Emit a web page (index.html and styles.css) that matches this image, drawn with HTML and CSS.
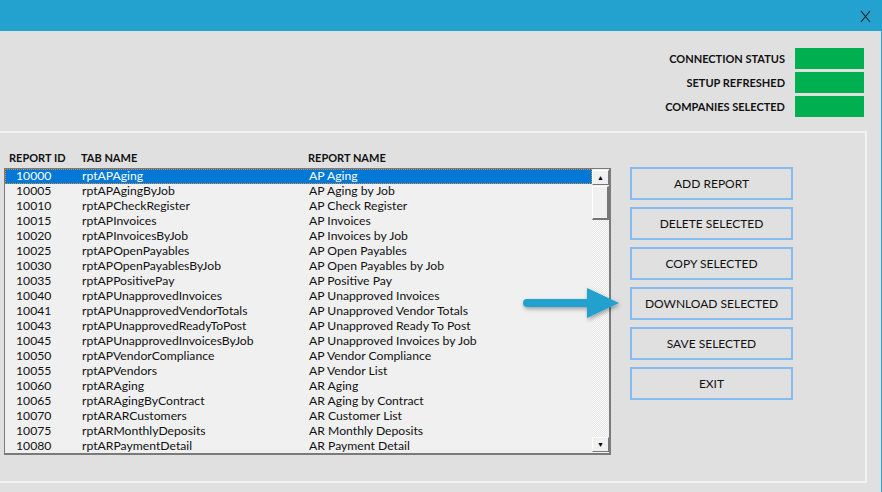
FILE: index.html
```html
<!DOCTYPE html>
<html lang="en">
<head>
    <meta charset="UTF-8">
    <title>Report Manager</title>
    <link rel="stylesheet" href="styles.css">
</head>
<body>
    <div class="window">
        <div class="titlebar">
            <svg class="close" width="11" height="13" viewBox="0 0 11 13">
                <path d="M1 1 L10 12 M10 1 L1 12" stroke="#1a1a1a" stroke-width="1.1" fill="none"/>
            </svg>
        </div>

        <div class="status-panel">
            <div class="status-row"><span>CONNECTION STATUS</span><i class="lamp"></i></div>
            <div class="status-row"><span>SETUP REFRESHED</span><i class="lamp"></i></div>
            <div class="status-row"><span>COMPANIES SELECTED</span><i class="lamp"></i></div>
        </div>

        <div class="frame">
            <div class="list-area">
                <div class="list-head">
                    <span class="c-id">REPORT ID</span>
                    <span class="c-tab">TAB NAME</span>
                    <span class="c-name">REPORT NAME</span>
                </div>
                <div class="listbox">
                    <div class="rows" id="rows"></div>
                    <div class="scrollbar">
                        <div class="sb-btn">&#9650;</div>
                        <div class="sb-thumb"></div>
                        <div class="sb-track"></div>
                        <div class="sb-btn">&#9660;</div>
                    </div>
                </div>
            </div>

            <div class="actions">
                <button>ADD REPORT</button>
                <button>DELETE SELECTED</button>
                <button>COPY SELECTED</button>
                <button>DOWNLOAD SELECTED</button>
                <button>SAVE SELECTED</button>
                <button>EXIT</button>
                <svg class="pointer" width="104" height="40" viewBox="0 0 104 40">
                    <defs>
                        <filter id="sh" x="-20%" y="-30%" width="140%" height="160%">
                            <feDropShadow dx="1" dy="2" stdDeviation="2" flood-color="#000" flood-opacity="0.35"/>
                        </filter>
                    </defs>
                    <g filter="url(#sh)">
                        <rect x="4" y="15" width="68" height="8" rx="4" fill="#22a1cf"/>
                        <polygon points="68,4 100,19 68,34" fill="#22a1cf"/>
                    </g>
                </svg>
            </div>
        </div>
    </div>

    <script>
        const reports = [
            ['10000', 'rptAPAging', 'AP Aging'],
            ['10005', 'rptAPAgingByJob', 'AP Aging by Job'],
            ['10010', 'rptAPCheckRegister', 'AP Check Register'],
            ['10015', 'rptAPInvoices', 'AP Invoices'],
            ['10020', 'rptAPInvoicesByJob', 'AP Invoices by Job'],
            ['10025', 'rptAPOpenPayables', 'AP Open Payables'],
            ['10030', 'rptAPOpenPayablesByJob', 'AP Open Payables by Job'],
            ['10035', 'rptAPPositivePay', 'AP Positive Pay'],
            ['10040', 'rptAPUnapprovedInvoices', 'AP Unapproved Invoices'],
            ['10041', 'rptAPUnapprovedVendorTotals', 'AP Unapproved Vendor Totals'],
            ['10043', 'rptAPUnapprovedReadyToPost', 'AP Unapproved Ready To Post'],
            ['10045', 'rptAPUnapprovedInvoicesByJob', 'AP Unapproved Invoices by Job'],
            ['10050', 'rptAPVendorCompliance', 'AP Vendor Compliance'],
            ['10055', 'rptAPVendors', 'AP Vendor List'],
            ['10060', 'rptARAging', 'AR Aging'],
            ['10065', 'rptARAgingByContract', 'AR Aging by Contract'],
            ['10070', 'rptARARCustomers', 'AR Customer List'],
            ['10075', 'rptARMonthlyDeposits', 'AR Monthly Deposits'],
            ['10080', 'rptARPaymentDetail', 'AR Payment Detail']
        ];

        document.getElementById('rows').innerHTML = reports
            .map((r, i) => `
                <div class="row${i === 0 ? ' selected' : ''}">
                    <span class="c-id">${r[0]}</span>
                    <span class="c-tab">${r[1]}</span>
                    <span class="c-name">${r[2]}</span>
                </div>
            `).join('');
    </script>
</body>
</html>
```

FILE: styles.css
```css
:root {
  --title-blue: #23a2d0;
  --panel-grey: #e0e0e0;
  --frame-line: #f2f2f2;
  --lamp-green: #00b050;
  --button-border: #86bdf0;
  --select-blue: #0078d7;
}

* { box-sizing: border-box; }

body {
  margin: 0;
  background: var(--panel-grey);
  font-family: Lato, "Open Sans", sans-serif;
  color: #111;
}

.window {
  width: 882px;
  height: 492px;
  border-right: 1px solid var(--title-blue);
  overflow: hidden;
}

.titlebar {
  height: 31px;
  background: var(--title-blue);
  display: flex;
  justify-content: flex-end;
  align-items: center;
  padding: 1px 10px 0 0;
}

/* status lamps */
.status-panel {
  display: flex;
  flex-direction: column;
  align-items: flex-end;
  gap: 3px;
  padding: 17px 17px 0 0;
  height: 100px;
}

.status-row {
  display: flex;
  align-items: center;
  gap: 10px;
  font-size: 11px;
  font-weight: bold;
}

.lamp {
  width: 69px;
  height: 21px;
  background: var(--lamp-green);
}

/* main frame */
.frame {
  width: 867px;
  height: 352px;
  border-top: 2px solid var(--frame-line);
  border-right: 2px solid var(--frame-line);
  border-bottom: 2px solid var(--frame-line);
  display: flex;
  padding: 18px 0 0 4px;
}

.list-area {
  width: 607px;
}

.list-head {
  display: flex;
  font-size: 11px;
  font-weight: bold;
  height: 17px;
  padding-left: 5px;
}

.list-head .c-id { width: 72px; }
.list-head .c-tab { width: 227px; }

.listbox {
  display: flex;
  height: 287px;
  border: 1px solid #7a7a7a;
  border-right-width: 2px;
  border-bottom-width: 2px;
  background: #f0f0f0;
}

.rows {
  flex: 1;
  overflow: hidden;
}

.row {
  display: flex;
  height: 15px;
  line-height: 14px;
  font-size: 12.2px;
  color: #111;
  white-space: nowrap;
}

.row .c-id { width: 77px; padding-left: 11px; }
.row .c-tab { width: 227px; }

.row.selected {
  background: var(--select-blue);
  color: #fff;
  outline: 1px dotted #e08a2c;
  outline-offset: -1px;
}

.scrollbar {
  width: 17px;
  display: flex;
  flex-direction: column;
  padding: 1px 0;
}

.sb-btn {
  height: 15px;
  background: #f0f0f0;
  border: 1px solid #fff;
  border-right-color: #777;
  border-bottom-color: #777;
  font-size: 7px;
  line-height: 13px;
  text-align: center;
  color: #000;
}

.sb-thumb {
  height: 34px;
  margin-top: 1px;
  background: #f0f0f0;
  border: 1px solid #fff;
  border-right: 2px solid #777;
  border-bottom: 2px solid #777;
}

.sb-track {
  flex: 1;
  background: repeating-conic-gradient(#e6e6e6 0 25%, #fafafa 0 50%) 0 0 / 2px 2px;
}

/* buttons */
.actions {
  position: relative;
  display: flex;
  flex-direction: column;
  gap: 7px;
  padding: 16px 0 0 19px;
}

.actions button {
  width: 163px;
  height: 33px;
  background: transparent;
  border: 2px solid var(--button-border);
  font-family: Lato, "Open Sans", sans-serif;
  font-size: 12px;
  color: #111;
  padding: 0;
}

.pointer {
  position: absolute;
  left: -92px;
  top: 133px;
}
```
